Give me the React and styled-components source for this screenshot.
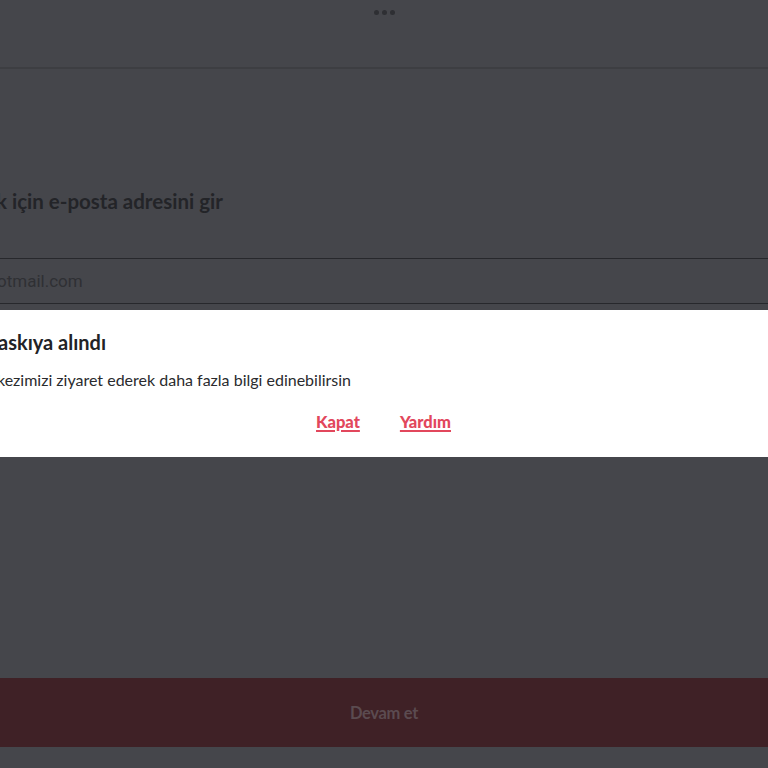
import styled, { createGlobalStyle } from 'styled-components';

const Global = createGlobalStyle`
  html, body { margin: 0; padding: 0; background: #45464b; }
  body { font-family: 'Lato', 'Open Sans', sans-serif; overflow: hidden; }
`

const Page = styled.div`width: 768px;
  height: 768px;
  background: #45464b;
  display: flex;
  flex-direction: column;
  overflow: hidden;
`
const TopBar = styled.div`height: 69px;
  border-bottom: 2px solid #3d3e42;
  display: flex;
  justify-content: center;
  padding-top: 10px;
  box-sizing: border-box;
`
const Dots = styled.div`display: flex;
  gap: 3px;
  height: 5px;
`
const Dot = styled.span`width: 5px;
  height: 5px;
  border-radius: 50%;
  background: #2e2f33;
`
const Heading = styled.h1`margin: 120px 0 0;
  font-size: 20.5px;
  font-weight: 700;
  color: #232428;
  line-height: 24px;
  text-indent: -4px;
  white-space: nowrap;
`
const Input = styled.div`margin-top: 45px;
  height: 46px;
  border-top: 1px solid #27282c;
  border-bottom: 1px solid #27282c;
  display: flex;
  align-items: center;
  font-family: 'Roboto', sans-serif;
  font-size: 17px;
  color: #2f3034;
  text-indent: -3px;
  white-space: nowrap;
  box-sizing: border-box;
`
const Dialog = styled.div`margin-top: 6px;
  background: #ffffff;
  height: 147px;
  display: flex;
  flex-direction: column;
  box-sizing: border-box;
  padding-top: 20px;
`
const DialogTitle = styled.div`font-size: 20px;
  font-weight: 700;
  color: #222326;
  line-height: 24px;
  text-indent: -2px;
  white-space: nowrap;
`
const DialogText = styled.div`margin-top: 16px;
  font-size: 16px;
  color: #2a2b2e;
  line-height: 20px;
  text-indent: -3px;
  white-space: nowrap;
`
const Actions = styled.div`width: 451px;
  margin-top: 22px;
  display: flex;
  justify-content: flex-end;
  gap: 40px;
`
const LinkButton = styled.a`font-size: 16.5px;
  font-weight: 900;
  color: #e2475c;
  text-decoration: underline;
  text-decoration-thickness: 2px;
  text-underline-offset: 2px;
  line-height: 20px;
  cursor: pointer;
`
const Spacer = styled.div`flex: 1;`
const Continue = styled.button`height: 69px;
  margin-bottom: 21px;
  border: 0;
  background: #3f2126;
  color: #5b4b50;
  font-family: 'Lato', sans-serif;
  font-size: 16.5px;
  font-weight: 700;
  letter-spacing: -0.3px;
`

export default function App() {
  return (
    <Page>
      <Global />
      <TopBar>
        <Dots><Dot /><Dot /><Dot /></Dots>
      </TopBar>
      <Heading>k için e-posta adresini gir</Heading>
      <Input>otmail.com</Input>
      <Dialog>
        <DialogTitle>askıya alındı</DialogTitle>
        <DialogText>kezimizi ziyaret ederek daha fazla bilgi edinebilirsin</DialogText>
        <Actions>
          <LinkButton>Kapat</LinkButton>
          <LinkButton>Yardım</LinkButton>
        </Actions>
      </Dialog>
      <Spacer />
      <Continue>Devam et</Continue>
    </Page>
  );
}
